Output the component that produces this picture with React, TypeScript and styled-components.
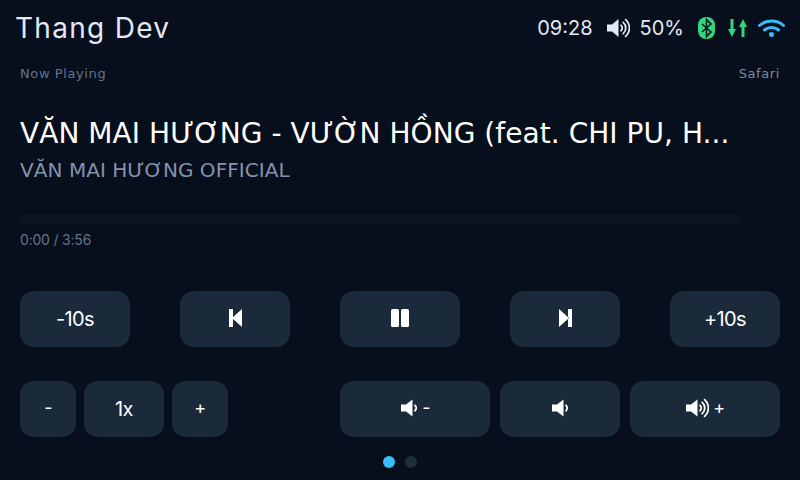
import styled, { createGlobalStyle } from 'styled-components';

const GlobalStyle = createGlobalStyle`
  html, body {
    margin: 0;
    padding: 0;
    background: #070e1c;
  }
`;

const Screen = styled.div`
  width: 800px;
  height: 480px;
  box-sizing: border-box;
  background: #070e1c;
  overflow: hidden;
  display: flex;
  flex-direction: column;
`;

const TopBar = styled.div`
  height: 56px;
  padding: 0 15px;
  display: flex;
  justify-content: space-between;
  align-items: center;
`;

const Brand = styled.div`
  font-family: Inter, sans-serif;
  font-size: 28px;
  letter-spacing: 1.3px;
  color: #e2e8f5;
`;

const Status = styled.div`
  display: flex;
  align-items: center;
  color: #e2e8f5;
  font-family: Inter, sans-serif;
  font-size: 20px;
`;

const StatusText = styled.span<{ $left: number }>`
  margin-left: ${p => p.$left}px;
`;

const StatusIcon = styled.svg<{ $left: number }>`
  display: block;
  margin-left: ${p => p.$left}px;
`;

const Content = styled.div`
  padding: 0 20px;
  display: flex;
  flex-direction: column;
`;

const LabelRow = styled.div`
  margin-top: 9px;
  display: flex;
  justify-content: space-between;
  font-family: "DejaVu Sans", sans-serif;
  font-size: 13px;
  line-height: 18px;
  letter-spacing: 0.6px;
  color: #64748b;
`;

const SafariLabel = styled.span`
  color: #7c8aa3;
`;

const Title = styled.div`
  margin-top: 31px;
  font-family: "DejaVu Sans", sans-serif;
  font-size: 28px;
  line-height: 40px;
  letter-spacing: 0.05px;
  color: #ffffff;
  white-space: nowrap;
`;

const Artist = styled.div`
  margin-top: 3px;
  font-family: "DejaVu Sans", sans-serif;
  font-size: 20px;
  line-height: 26px;
  letter-spacing: 0.05px;
  color: #8492ad;
`;

const Track = styled.div`
  margin-top: 31px;
  width: 720px;
  height: 10px;
  border-radius: 5px;
  background: #0a1520;
`;

const Time = styled.div`
  margin-top: 6px;
  font-family: Inter, sans-serif;
  font-size: 14px;
  line-height: 20px;
  letter-spacing: -0.2px;
  color: #64748b;
`;

const Row = styled.div<{ $top: number }>`
  margin-top: ${p => p.$top}px;
  display: flex;
  justify-content: space-between;
`;

const Group = styled.div<{ $gap: number }>`
  display: flex;
  gap: ${p => p.$gap}px;
`;

const Button = styled.button<{ $w: number }>`
  width: ${p => p.$w}px;
  height: 56px;
  border: none;
  border-radius: 14px;
  padding: 0;
  background: #1a2a3a;
  color: #ffffff;
  font-family: Inter, sans-serif;
  font-size: 20px;
  letter-spacing: -0.6px;
  display: flex;
  align-items: center;
  justify-content: center;
  gap: 4px;
`;

const SmallSign = styled.span`
  font-size: 18px;
  margin-bottom: 3px;
`;

const ControlIcon = styled.svg`
  display: block;
  margin-bottom: 2px;
`;

const Dots = styled.div`
  margin-top: 19px;
  display: flex;
  justify-content: center;
  gap: 10px;
`;

const Dot = styled.span<{ $active?: boolean }>`
  width: 12px;
  height: 12px;
  border-radius: 50%;
  background: ${p => (p.$active ? '#38bdf8' : '#1e2f3b')};
`;

const Speaker = ({ loud }: { loud?: boolean }) => (
  <ControlIcon width={loud ? 24 : 18} height="24" viewBox={loud ? '0 0 24 24' : '0 0 18 24'} fill="none">
    <path d="M1 8.500h5L12.500 3.500v17L6 15.500H1z" fill="#fff" />
    <path d="M15 9.300a3.600 3.600 0 0 1 0 5.400" stroke="#fff" strokeWidth="1.800" strokeLinecap="round" />
    {loud && (
      <path d="M17.200 6.400a7.400 7.400 0 0 1 0 11.200M19.600 3.600a11.200 11.200 0 0 1 0 16.800" stroke="#fff" strokeWidth="1.800" strokeLinecap="round" />
    )}
  </ControlIcon>
);

const App = () => {
  return (
    <Screen>
      <GlobalStyle />
      <TopBar>
        <Brand>Thang Dev</Brand>
        <Status>
          <span>09:28</span>
          <StatusIcon $left={13} width="24" height="24" viewBox="0 0 24 24" fill="none">
            <path d="M1 8.500h5L12.500 3v18L6 15.500H1z" fill="#e2e8f5" />
            <path d="M15 9.300a3.600 3.600 0 0 1 0 5.400M17.200 6.400a7.400 7.400 0 0 1 0 11.200M19.600 3.600a11.200 11.200 0 0 1 0 16.800" stroke="#e2e8f5" strokeWidth="1.800" strokeLinecap="round" />
          </StatusIcon>
          <StatusText $left={10}>50%</StatusText>
          <StatusIcon $left={14} width="17" height="22" viewBox="0 0 17 22">
            <rect width="17" height="22" rx="8" fill="#34d57f" />
            <path d="M4 7l9 8-4.500 4.500v-17L13 7l-9 8" fill="none" stroke="#0a1a1c" strokeWidth="1.600" />
          </StatusIcon>
          <StatusIcon $left={13} width="19" height="18" viewBox="0 0 19 18">
            <path d="M2.500 0h3v10H8l-4 8-4-8h2.500z" fill="#34d57f" />
            <path d="M13.500 18h3V8H19l-4-8-4 8h2.500z" fill="#34d57f" />
          </StatusIcon>
          <StatusIcon $left={11} width="27" height="20" viewBox="0 0 27 20" fill="none">
            <path d="M1.500 7.500C8 1.500 19 1.500 25.500 7.500" stroke="#38bdf8" strokeWidth="3" strokeLinecap="round" />
            <path d="M6.500 12C10.500 8.500 16.500 8.500 20.500 12" stroke="#38bdf8" strokeWidth="3" strokeLinecap="round" />
            <circle cx="13.500" cy="16.500" r="2.500" fill="#38bdf8" />
          </StatusIcon>
        </Status>
      </TopBar>

      <Content>
        <LabelRow>
          <span>Now Playing</span>
          <SafariLabel>Safari</SafariLabel>
        </LabelRow>
        <Title>VĂN MAI HƯƠNG - VƯỜN HỒNG (feat. CHI PU, H...</Title>
        <Artist>VĂN MAI HƯƠNG OFFICIAL</Artist>
        <Track />
        <Time>0:00 / 3:56</Time>

        <Row $top={41}>
          <Button $w={110}>-10s</Button>
          <Button $w={110}>
            <ControlIcon width="13" height="18" viewBox="0 0 13 18"><path d="M0 0h4v18H0zM13 0v18L3 9z" fill="#fff" /></ControlIcon>
          </Button>
          <Button $w={120}>
            <ControlIcon width="18" height="18" viewBox="0 0 18 18"><rect width="8" height="18" rx="1.500" fill="#fff" /><rect x="10" width="8" height="18" rx="1.500" fill="#fff" /></ControlIcon>
          </Button>
          <Button $w={110}>
            <ControlIcon width="13" height="18" viewBox="0 0 13 18"><path d="M0 0v18l10-9zM9 0h4v18H9z" fill="#fff" /></ControlIcon>
          </Button>
          <Button $w={110}>+10s</Button>
        </Row>

        <Row $top={34}>
          <Group $gap={8}>
            <Button $w={56}><SmallSign>-</SmallSign></Button>
            <Button $w={80}>1x</Button>
            <Button $w={56}><SmallSign>+</SmallSign></Button>
          </Group>
          <Group $gap={10}>
            <Button $w={150}><Speaker /><SmallSign>-</SmallSign></Button>
            <Button $w={120}><Speaker /></Button>
            <Button $w={150}><Speaker loud /><SmallSign>+</SmallSign></Button>
          </Group>
        </Row>
      </Content>

      <Dots>
        <Dot $active />
        <Dot />
      </Dots>
    </Screen>
  );
};

export default App;
